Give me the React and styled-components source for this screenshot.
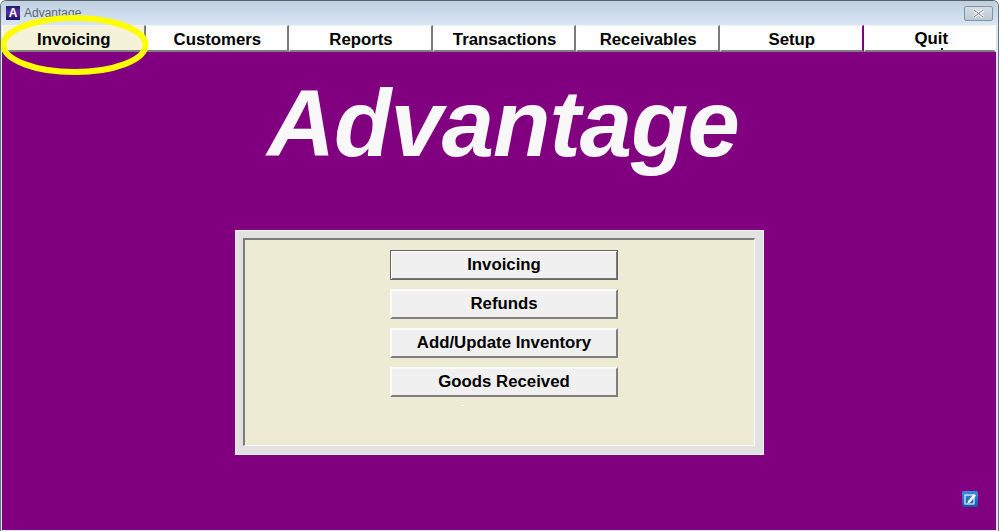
import React from 'react'
import styled, { createGlobalStyle } from 'styled-components'

const GlobalStyle = createGlobalStyle`
  html, body {
    margin: 0;
    padding: 0;
    background: #fff;
  }
  body {
    font-family: "Liberation Sans", Arial, sans-serif;
  }
`

const Window = styled.div`
  position: relative;
  width: 999px;
  height: 531px;
  box-sizing: border-box;
  display: flex;
  flex-direction: column;
  overflow: hidden;
  padding: 0 2px 1px 1px;
  background: #d9e5f2;
  border-top: 1px solid #5a5f66;
  border-left: 1px solid #6d7680;
  border-right: 1px solid #6d7680;
  border-radius: 6px 6px 0 0;
`

const TitleBar = styled.div`
  flex: 0 0 24px;
  margin: 0 -2px 0 -1px;
  padding: 0 5px;
  display: flex;
  align-items: center;
  gap: 4px;
  background: linear-gradient(#bfcfdf, #d8e6f4);
`

const AppIcon = styled.div`
  width: 14px;
  height: 14px;
  display: flex;
  align-items: center;
  justify-content: center;
  color: #fff;
  font-size: 12px;
  font-weight: bold;
  background: linear-gradient(#1c1a6b, #5a2d9c 45%, #17106a);
`

const TitleText = styled.span`
  flex: 1;
  font-size: 12px;
  color: #5c6670;
`

const CloseButton = styled.div`
  width: 29px;
  height: 15px;
  box-sizing: border-box;
  display: flex;
  align-items: center;
  justify-content: center;
  border: 1px solid #87919c;
  border-radius: 2px;
  background: linear-gradient(#d5dde6, #bcc8d4);
`

const TabBar = styled.div`
  flex: 0 0 27px;
  display: flex;
  background: #fff;
`

const Tab = styled.div`
  position: relative;
  flex: ${props => (props.$last ? '1 1 0' : '0 0 143.6px')};
  box-sizing: border-box;
  display: flex;
  align-items: center;
  justify-content: center;
  padding: ${props => (props.$last ? '1px 0 0 4px' : '3px 0 0 1px')};
  font-size: 16.8px;
  font-weight: bold;
  color: #000;
  background: ${props => (props.$active ? '#f4f2d9' : '#fff')};
  border-top: 1px solid #f2f2f2;
  border-left: 1px solid #fff;
  border-right: 2px solid ${props => props.$divider};
  border-bottom: 2px solid #808080;
`

const Body = styled.main`
  flex: 1;
  display: flex;
  flex-direction: column;
  align-items: center;
  background: #800080;
`

const Logo = styled.h1`
  margin: 16px 0 0 8px;
  height: 162px;
  font-size: 94px;
  line-height: 112px;
  font-weight: bold;
  font-style: italic;
  letter-spacing: -1px;
  color: #f8f8f8;
`

const Panel = styled.section`
  width: 529px;
  height: 225px;
  box-sizing: border-box;
  padding: 7px 8px 8px 7px;
  background: #e2e2e2;
  border: 1px solid #f4f4f4;
`

const PanelInner = styled.div`
  position: relative;
  height: 100%;
  box-sizing: border-box;
  display: flex;
  flex-direction: column;
  align-items: center;
  gap: 9px;
  padding: 10px 0 0 10px;
  background: #eeebd4;
  border-top: 2px solid #7c7c7c;
  border-left: 2px solid #7c7c7c;
  border-right: 1px solid #f8f8f8;
  border-bottom: 1px solid #f8f8f8;
`

const MenuButton = styled.button`
  width: 228px;
  height: 30px;
  box-sizing: border-box;
  padding: 0 0 1px;
  font-family: inherit;
  font-size: 16.8px;
  font-weight: bold;
  color: #000;
  background: #f0f0f0;
  border-style: solid;
  border-width: ${props => (props.$focused ? '1px' : '2px')};
  border-color: ${props =>
    props.$focused ? '#666' : '#fbfbfb #7f7f7f #7f7f7f #fbfbfb'};
  box-shadow: ${props =>
    props.$focused ? 'inset 1px 1px 0 #fff, inset -1px -1px 0 #777' : 'none'};
`

const Speck = styled.span`
  position: absolute;
  left: 216px;
  top: 165px;
  width: 3px;
  height: 1px;
  background: #fff;
`

const QuitDot = styled.span`
  position: absolute;
  left: 76px;
  bottom: 0;
  width: 2px;
  height: 2px;
  background: #222;
`

const NoteIcon = styled.svg`
  position: absolute;
  right: 20px;
  bottom: 24px;
  width: 16px;
  height: 16px;
`

const Highlight = styled.svg`
  position: absolute;
  left: -1px;
  top: -1px;
  width: 153px;
  height: 80px;
  pointer-events: none;
`

const tabs = ['Invoicing', 'Customers', 'Reports', 'Transactions', 'Receivables', 'Setup', 'Quit']
const actions = ['Invoicing', 'Refunds', 'Add/Update Inventory', 'Goods Received']

const dividerFor = i => {
  if (i === tabs.length - 1) return 'transparent'
  return i === tabs.length - 2 ? '#800080' : '#7c7c7c'
}

export default function App() {
  return (
    <>
      <GlobalStyle />
      <Window>
        <TitleBar>
          <AppIcon>A</AppIcon>
          <TitleText>Advantage</TitleText>
          <CloseButton>
            <svg width="13" height="9" viewBox="0 0 13 9">
              <path d="M2 1l9 7M11 1L2 8" stroke="#fff" strokeWidth="3" />
              <path d="M2 1l9 7M11 1L2 8" stroke="#6c7783" strokeWidth="1" />
            </svg>
          </CloseButton>
        </TitleBar>
        <TabBar>
          {tabs.map((t, i) => (
            <Tab
              key={t}
              $active={i === 0}
              $last={i === tabs.length - 1}
              $divider={dividerFor(i)}
            >
              {t}
              {i === tabs.length - 1 && <QuitDot />}
            </Tab>
          ))}
        </TabBar>
        <Body>
          <Logo>Advantage</Logo>
          <Panel>
            <PanelInner>
              {actions.map((a, i) => (
                <MenuButton key={a} $focused={i === 0}>{a}</MenuButton>
              ))}
              <Speck />
            </PanelInner>
          </Panel>
        </Body>
        <NoteIcon viewBox="0 0 16 16">
          <defs>
            <linearGradient id="noteBlue" x1="0" y1="0" x2="0" y2="1">
              <stop offset="0" stopColor="#3f8fe0" />
              <stop offset="1" stopColor="#1257a8" />
            </linearGradient>
          </defs>
          <rect x="0" y="0" width="16" height="16" rx="2" fill="url(#noteBlue)" />
          <rect x="3" y="4" width="9" height="9" fill="none" stroke="#e8f2fb" strokeWidth="1.2" />
          <path d="M6 10l6-7 2 1.6-6 7-2.6.8z" fill="#fff" />
        </NoteIcon>
        <Highlight viewBox="0 0 153 80">
          <ellipse cx="74.5" cy="45" rx="71" ry="27" fill="none" stroke="#ffff00" strokeWidth="6" />
        </Highlight>
      </Window>
    </>
  )
}
